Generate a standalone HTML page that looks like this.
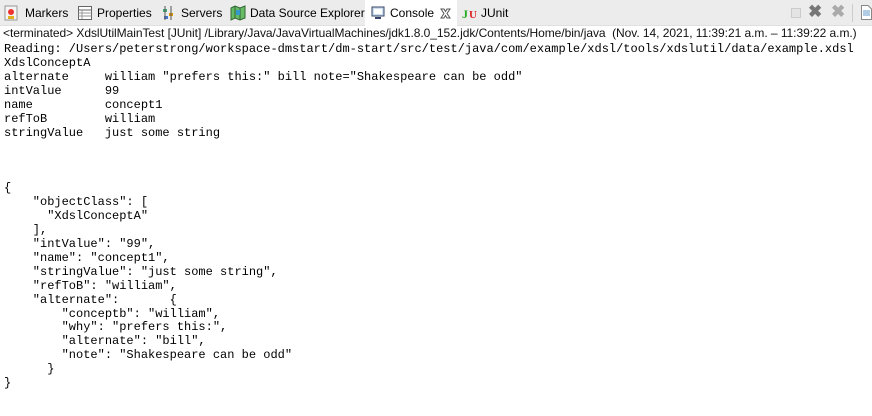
<!DOCTYPE html>
<html><head><meta charset="utf-8"><style>
*{margin:0;padding:0;box-sizing:border-box}
body{width:872px;height:416px;background:#fff;overflow:hidden;position:relative;font-family:"Liberation Sans",sans-serif;color:#000}
#bar{position:absolute;left:0;top:0;width:872px;height:26px;background:#ececec;border-bottom:1px solid #e0e0e0}
.t{position:absolute;top:6px;font-size:12px;line-height:15px;white-space:nowrap}
.ic{position:absolute}
#sel{position:absolute;left:365px;top:0;width:92px;height:27px;background:#fff}
#sub{position:absolute;left:3px;top:26px;font-size:12px;line-height:14px;white-space:nowrap;color:#111;letter-spacing:-0.05px}
pre{position:absolute;left:4px;top:43px;font-family:"Liberation Mono",monospace;font-size:12px;line-height:13.92px;color:#000}
</style></head><body>
<div id="bar">
<div id="sel"></div>
<svg class="ic" style="left:4px;top:5px" width="15" height="16"><rect x="1" y="1" width="12" height="14" fill="#f4f4f4" stroke="#999"/><circle cx="7" cy="7" r="3" fill="#e33"/><rect x="4" y="11" width="6" height="3" fill="#e0b020"/></svg>
<div class="t" style="left:25px">Markers</div>
<svg class="ic" style="left:78px;top:6px" width="14" height="14"><rect x="0.5" y="0.5" width="13" height="13" fill="#fff" stroke="#666"/><line x1="0.5" y1="4" x2="13.5" y2="4" stroke="#666"/><line x1="0.5" y1="7" x2="13.5" y2="7" stroke="#999"/><line x1="0.5" y1="10" x2="13.5" y2="10" stroke="#999"/><line x1="4" y1="4" x2="4" y2="13" stroke="#999"/></svg>
<div class="t" style="left:97px">Properties</div>
<svg class="ic" style="left:162px;top:6px" width="13" height="14"><rect x="1" y="3" width="4" height="3" fill="#4a7"/><rect x="7" y="7" width="4" height="3" fill="#d90"/><rect x="2" y="10" width="4" height="3" fill="#47c"/><line x1="3" y1="0" x2="3" y2="14" stroke="#555"/><line x1="9" y1="0" x2="9" y2="14" stroke="#555"/></svg>
<div class="t" style="left:181px">Servers</div>
<svg class="ic" style="left:230px;top:5px" width="16" height="16"><path d="M1 3 L5 1 L10 3 L15 1 L15 13 L10 15 L5 13 L1 15Z" fill="#6b6" stroke="#363"/><path d="M5 1 L5 13 M10 3 L10 15" stroke="#363"/><rect x="6" y="5" width="4" height="5" fill="#39c"/></svg>
<div class="t" style="left:250px">Data Source Explorer</div>
<svg class="ic" style="left:371px;top:6px" width="14" height="14"><rect x="1" y="1" width="12" height="9" fill="#cde" stroke="#346"/><rect x="3" y="3" width="8" height="5" fill="#fff"/><rect x="4" y="11" width="6" height="2" fill="#346"/></svg>
<div class="t" style="left:390px">Console</div>
<svg class="ic" style="left:440px;top:8px" width="11" height="11"><path d="M1 1 L4 1 L5.5 3.5 L7 1 L10 1 L7 5.5 L10 10 L7 10 L5.5 7.5 L4 10 L1 10 L4 5.5Z" fill="none" stroke="#555"/></svg>
<svg class="ic" style="left:462px;top:6px" width="16" height="14"><text x="0" y="12" font-size="12" font-weight="bold" fill="#2a2" font-family="Liberation Serif">J</text><text x="7" y="12" font-size="11" font-weight="bold" fill="#d22" font-family="Liberation Serif">U</text></svg>
<div class="t" style="left:481px">JUnit</div>
<div class="ic" style="left:791px;top:8px;width:10px;height:10px;background:#e4e4e4;border:1px solid #ccc"></div>
<div class="ic" style="left:808px;top:2px;font-size:17px;font-weight:bold;color:#777">✖</div>
<div class="ic" style="left:831px;top:2px;font-size:17px;font-weight:bold;color:#aaa">✖</div>
<div class="ic" style="left:852px;top:4px;width:1px;height:18px;background:#ccc"></div>
<svg class="ic" style="left:861px;top:5px" width="11" height="15"><path d="M0.5 0.5 H7 L10.5 4 V14.5 H0.5Z" fill="#fff" stroke="#888"/><path d="M2 6H9M2 8H9M2 10H9" stroke="#69c"/></svg>
</div>
<div id="sub">&lt;terminated&gt; XdslUtilMainTest [JUnit] /Library/Java/JavaVirtualMachines/jdk1.8.0_152.jdk/Contents/Home/bin/java&nbsp; (Nov. 14, 2021, 11:39:21 a.m. – 11:39:22 a.m.)</div>
<pre>Reading: /Users/peterstrong/workspace-dmstart/dm-start/src/test/java/com/example/xdsl/tools/xdslutil/data/example.xdsl
XdslConceptA
alternate     william "prefers this:" bill note="Shakespeare can be odd"
intValue      99
name          concept1
refToB        william
stringValue   just some string



{
    "objectClass": [
      "XdslConceptA"
    ],
    "intValue": "99",
    "name": "concept1",
    "stringValue": "just some string",
    "refToB": "william",
    "alternate":       {
        "conceptb": "william",
        "why": "prefers this:",
        "alternate": "bill",
        "note": "Shakespeare can be odd"
      }
}</pre>
</body></html>
